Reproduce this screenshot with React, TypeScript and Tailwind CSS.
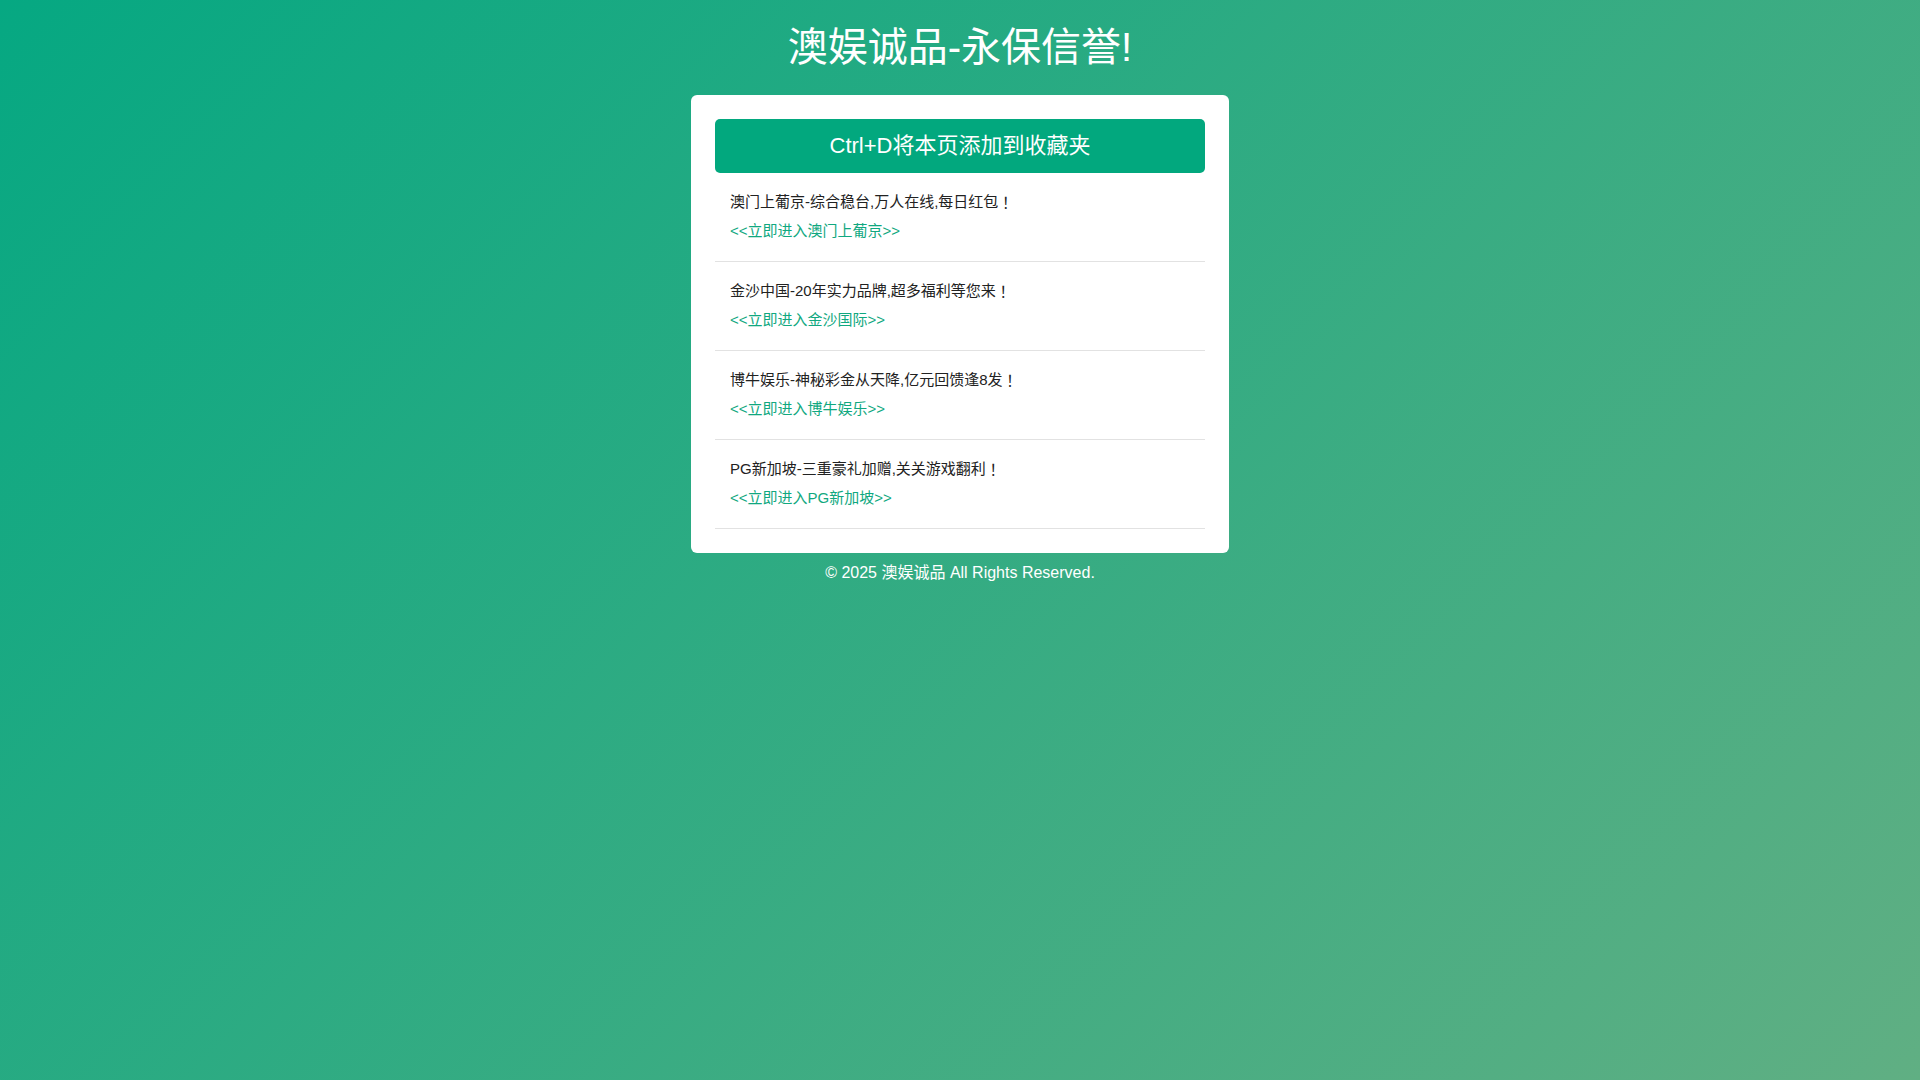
const items = [
  { title: "澳门上葡京-综合稳台,万人在线,每日红包", link: "<<立即进入澳门上葡京>>" },
  { title: "金沙中国-20年实力品牌,超多福利等您来", link: "<<立即进入金沙国际>>" },
  { title: "博牛娱乐-神秘彩金从天降,亿元回馈逢8发", link: "<<立即进入博牛娱乐>>" },
  { title: "PG新加坡-三重豪礼加赠,关关游戏翻利", link: "<<立即进入PG新加坡>>" },
];

export default function App() {
  return (
    <div
      className="min-h-screen w-full bg-[linear-gradient(135deg,#06a882_0%,#60af83_100%)] text-center"
      style={{ fontFamily: '"Liberation Sans", Arial, "Noto Sans CJK SC", sans-serif' }}
    >
      <h1 className="pt-[17px] mb-[18px] text-[40px] leading-[60px] font-normal text-white">澳娱诚品-永保信誉!</h1>

      <div className="mx-auto w-[538px] rounded-md bg-white p-6 text-left">
        <div className="rounded-[5px] bg-[#02a87e] py-[15px] text-center text-[22px] leading-6 text-white">
          Ctrl+D将本页添加到收藏夹
        </div>

        <ul>
          {items.map((item) => (
            <li key={item.link} className="border-b border-[#e2e2e2] px-[15px] pt-[16px] pb-[17px]">
              <p className="text-[15px] leading-[26px] text-[#222]">
                {item.title}
                {/* centred full-width exclamation like the original */}
                <span className="align-top" style={{ fontFamily: '"Noto Sans CJK TC", sans-serif' }}>
                  ！
                </span>
              </p>
              <a href="#" className="mt-[3px] block text-[15px] leading-[26px] text-[#10a880]">
                {item.link}
              </a>
            </li>
          ))}
        </ul>
      </div>

      <p className="mt-2 text-base leading-6 text-white">© 2025 澳娱诚品 All Rights Reserved.</p>
    </div>
  );
}
